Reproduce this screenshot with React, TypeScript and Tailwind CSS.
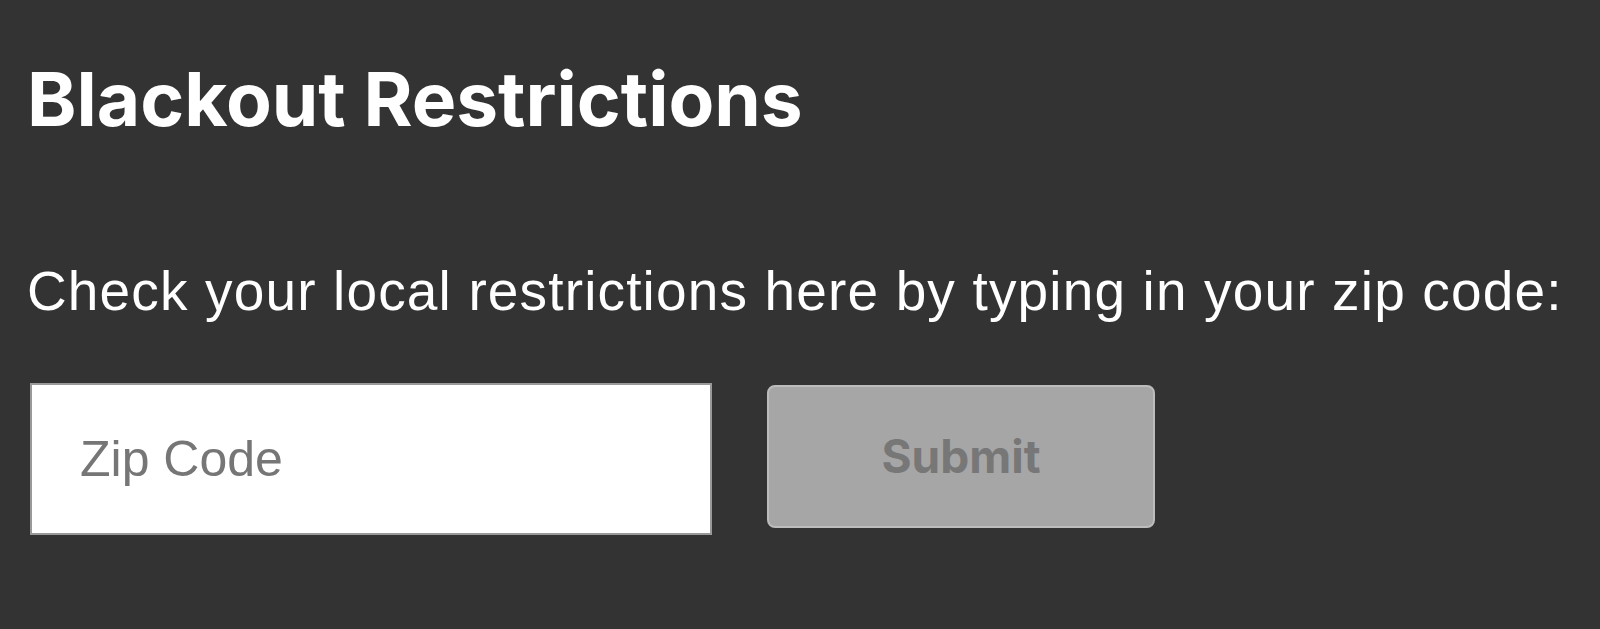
import React from "react";

export default function App() {
  return (
    <div className="min-h-[629px] w-full bg-[#333333] pl-[27px] pt-[62px]">
      <h1 className="m-0 text-[74.8px] font-bold leading-[75px] text-white [font-family:Inter,'Noto_Sans',sans-serif]">
        Blackout Restrictions
      </h1>
      <p className="mt-[127px] text-[55px] leading-[55px] tracking-[1.15px] text-white [font-family:'Liberation_Sans',Arial,sans-serif]">
        Check your local restrictions here by typing in your zip code:
      </p>
      <div className="mt-[64px] flex items-start gap-[55px] pl-[3px]">
        <input
          type="text"
          placeholder="Zip Code"
          className="h-[152px] w-[682px] border-2 border-[#999999] bg-white pl-[48px] text-[50px] text-[#333] outline-none placeholder:text-[#767676] [font-family:'Liberation_Sans',Arial,sans-serif]"
        />
        <button
          type="button"
          disabled
          className="mt-[2px] h-[143px] w-[388px] rounded-[8px] border-2 border-[#bcbcbc] bg-[#a6a6a6] text-[46px] font-bold text-[#777777] [font-family:Inter,'Noto_Sans',sans-serif]"
        >
          Submit
        </button>
      </div>
    </div>
  );
}
